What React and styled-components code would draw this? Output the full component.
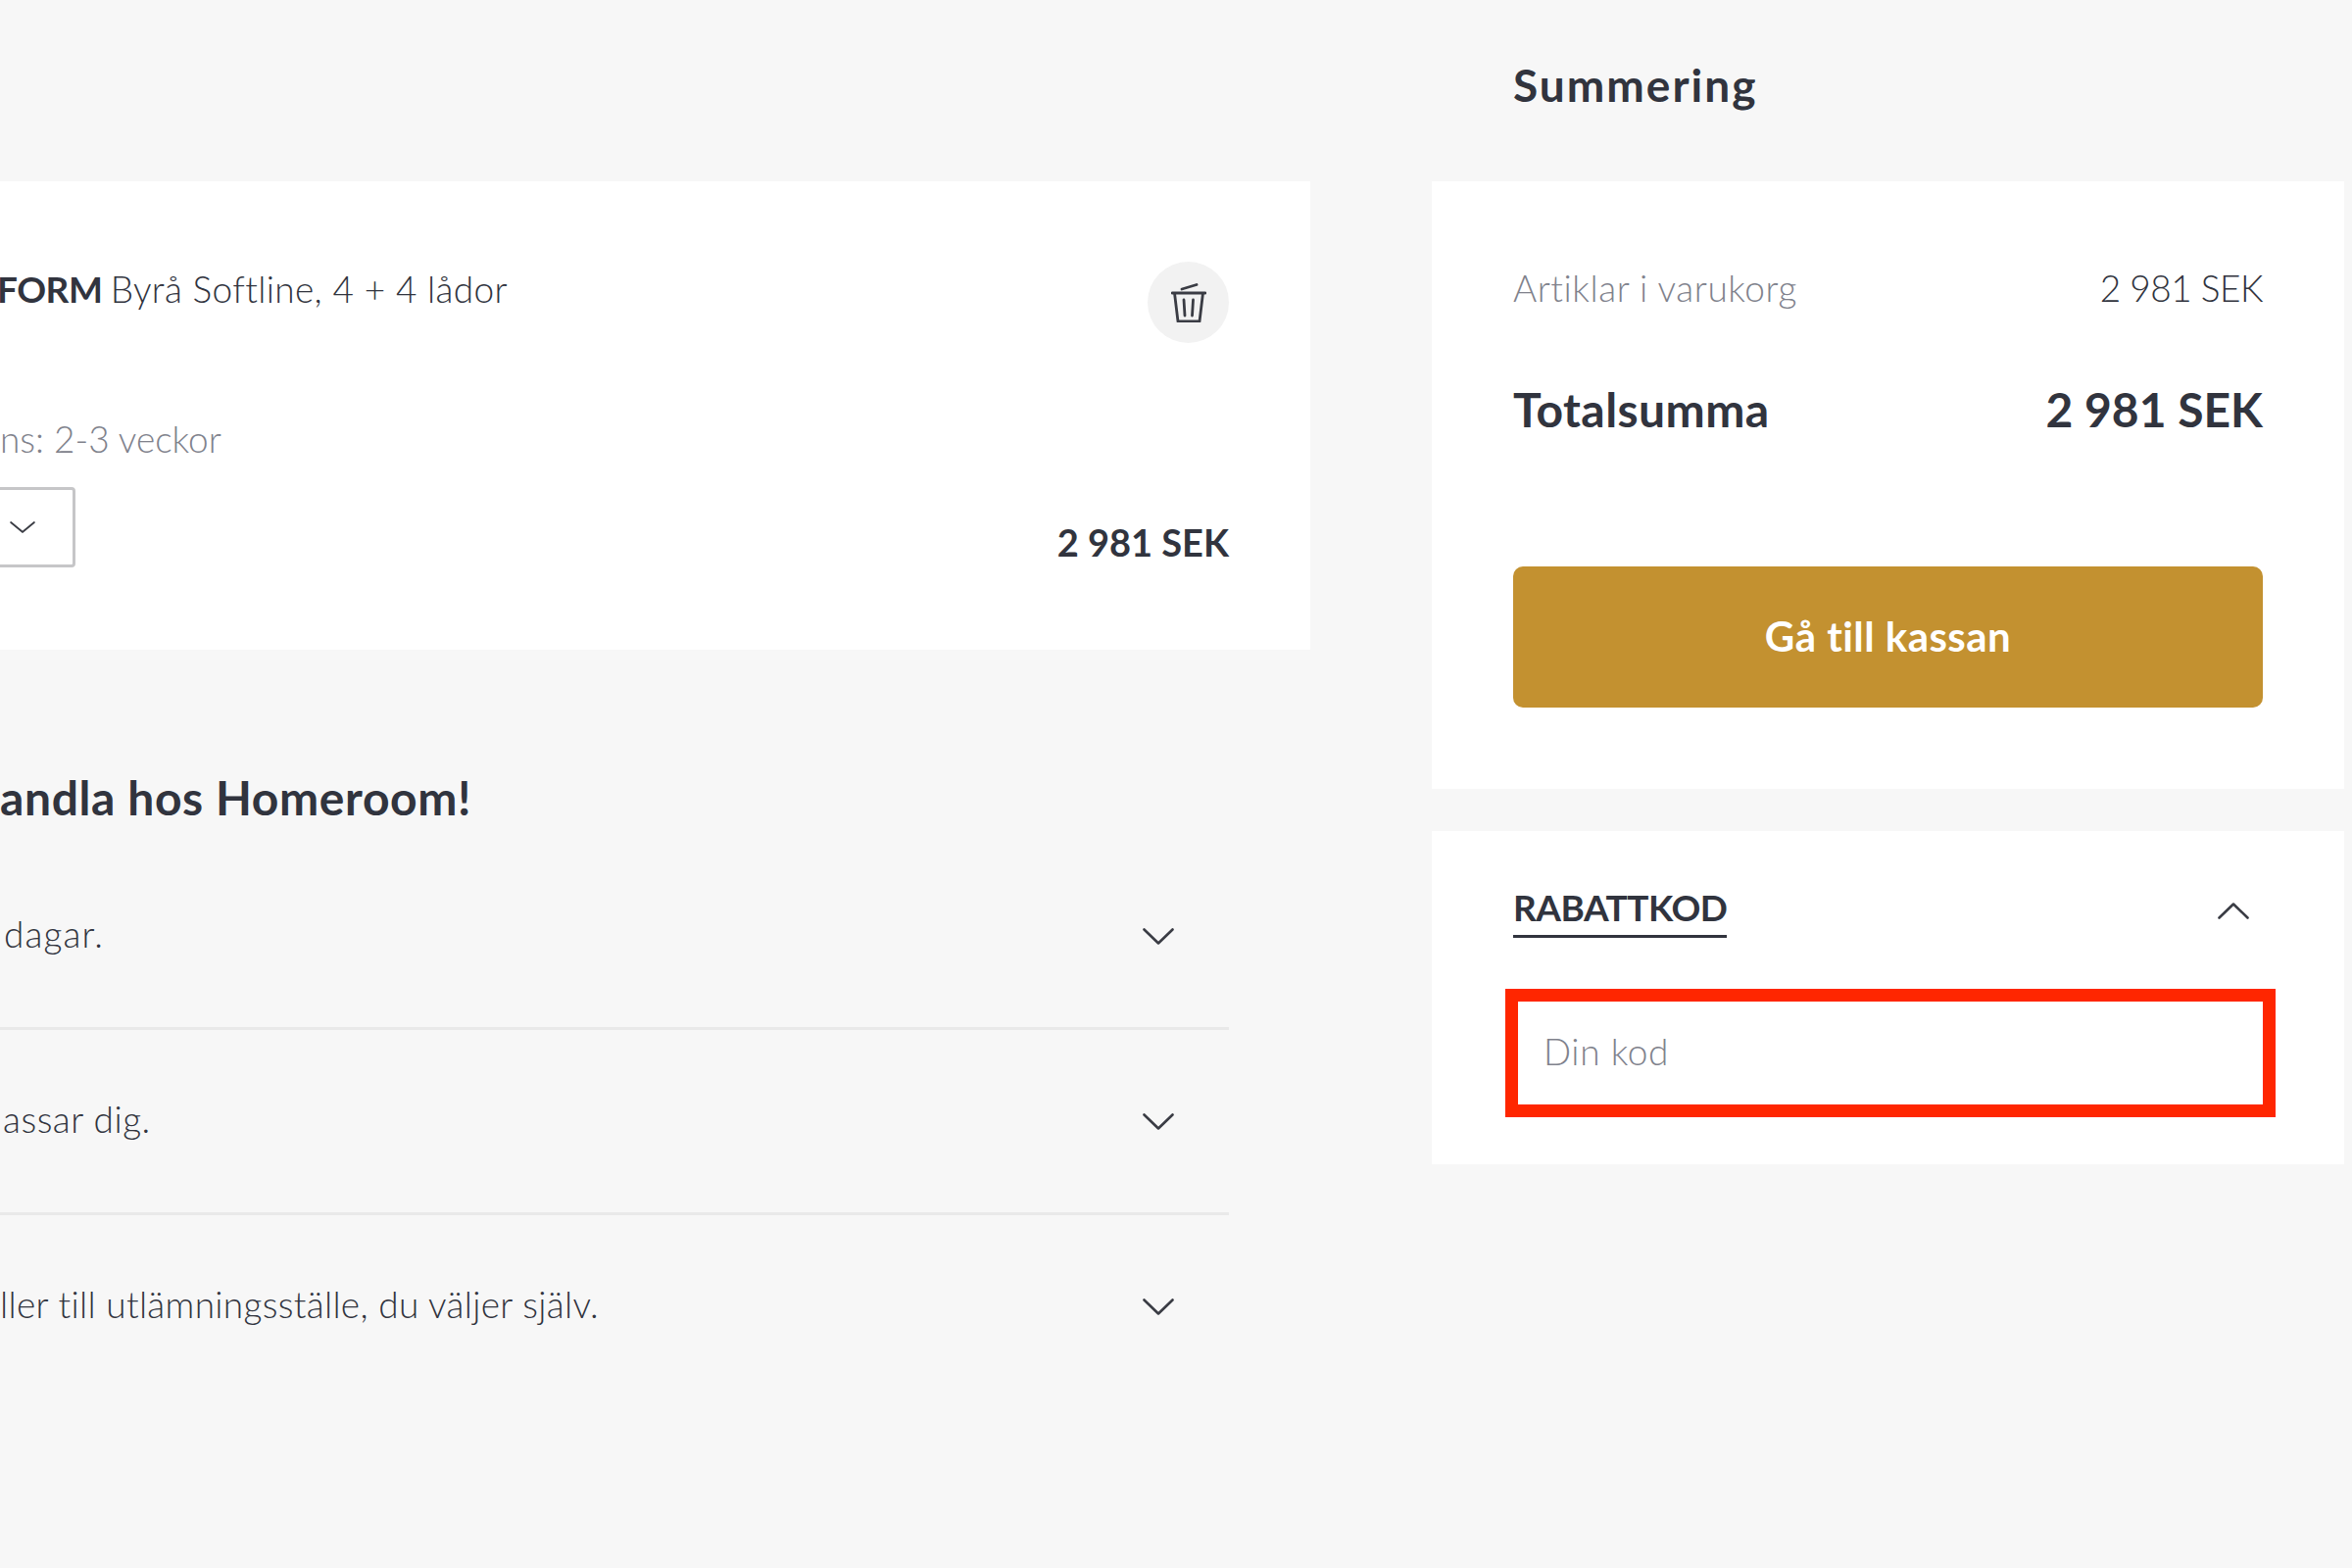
import React from "react";
import styled, { createGlobalStyle } from "styled-components";

const GlobalStyle = createGlobalStyle`
  html, body {
    margin: 0;
    padding: 0;
    background: #f7f7f7;
  }
`;

const Page = styled.div`
  width: 2400px;
  height: 1600px;
  overflow: hidden;
  display: grid;
  grid-template-columns: 1337px 931px;
  column-gap: 124px;
  background: #f7f7f7;
  color: #31343e;
  font-family: Lato, "Open Sans", sans-serif;
  font-variant-ligatures: none;
`;

const LeftColumn = styled.main`
  padding-top: 185px;
`;

const RightColumn = styled.aside`
  display: flex;
  flex-direction: column;
  gap: 43px;
`;

const SummaryTitle = styled.h2`
  margin: 0 0 -43px 83px;
  height: 185px;
  padding-top: 60px;
  box-sizing: border-box;
  font-size: 46px;
  line-height: 54px;
  font-weight: 700;
  letter-spacing: 2px;
`;

const ItemCard = styled.section`
  display: flex;
  justify-content: space-between;
  height: 478px;
  box-sizing: border-box;
  padding: 83px 83px 83px 0;
  background: #fff;
`;

const ItemInfo = styled.div`
  display: flex;
  flex-direction: column;
`;

const ItemName = styled.div`
  margin: -1px 0 1px -3px;
  font-size: 37px;
  line-height: 56px;
  font-weight: 300;
  letter-spacing: 0.35px;
  white-space: nowrap;

  b {
    margin-right: -2px;
    font-weight: 700;
    letter-spacing: -0.5px;
  }
`;

const LeadTime = styled.div`
  margin-top: 96px;
  font-size: 37px;
  line-height: 56px;
  font-weight: 300;
  color: #80828c;
`;

const QuantitySelect = styled.div`
  display: flex;
  align-items: center;
  width: 87px;
  height: 82px;
  margin: 21px 0 0 -10px;
  padding-left: 17px;
  box-sizing: border-box;
  border: 3px solid #c6c6c8;
  border-radius: 4px;
`;

const ItemActions = styled.div`
  display: flex;
  flex-direction: column;
  align-items: flex-end;
  justify-content: space-between;
`;

const TrashButton = styled.button`
  display: flex;
  align-items: center;
  justify-content: center;
  width: 83px;
  height: 83px;
  margin-top: -1px;
  padding: 0;
  border: 0;
  border-radius: 50%;
  background: #f2f2f2;
`;

const ItemPrice = styled.div`
  margin-bottom: 1px;
  font-size: 38px;
  line-height: 52px;
  font-weight: 700;
  white-space: nowrap;
`;

const UspTitle = styled.h2`
  margin: 0;
  padding-top: 121px;
  height: 199px;
  box-sizing: border-box;
  font-size: 48px;
  line-height: 60px;
  font-weight: 700;
  letter-spacing: 0.6px;
  white-space: nowrap;
`;

const UspList = styled.div`
  width: 1254px;
`;

const UspRow = styled.div`
  display: flex;
  align-items: center;
  justify-content: space-between;
  height: 189px;
  box-sizing: border-box;
  padding: 0 56px 5px ${(p) => p.$indent || 0}px;
  border-bottom: 3px solid ${(p) => (p.$last ? "transparent" : "#e9e9e9")};
  font-size: 37px;
  font-weight: 300;
  letter-spacing: ${(p) => p.$tracking || 0.3}px;
  white-space: nowrap;
`;

const SummaryCard = styled.section`
  padding: 83px;
  background: #fff;
`;

const SummaryRow = styled.div`
  display: flex;
  justify-content: space-between;
  font-size: ${(p) => (p.$total ? "48px" : "37px")};
  line-height: ${(p) => (p.$total ? "64px" : "52px")};
  font-weight: ${(p) => (p.$total ? 700 : 300)};
  margin-top: ${(p) => (p.$total ? "66px" : "0")};
`;

const RowLabel = styled.span`
  color: ${(p) => (p.$muted ? "#80828c" : "inherit")};
  letter-spacing: ${(p) => (p.$muted ? "0.55px" : "0.45px")};
`;

const RowValue = styled.span`
  letter-spacing: ${(p) => (p.$tight ? "-0.5px" : "0")};
`;

const CheckoutButton = styled.button`
  display: block;
  width: 100%;
  height: 144px;
  margin-top: 128px;
  padding-bottom: 3px;
  border: 0;
  border-radius: 10px;
  background: #c39130;
  color: #fff;
  font-family: inherit;
  font-variant-ligatures: none;
  font-size: 42px;
  font-weight: 700;
  letter-spacing: 0.45px;
`;

const DiscountCard = styled.section`
  height: 340px;
  box-sizing: border-box;
  padding: 54px 83px 0;
  background: #fff;
`;

const DiscountHeader = styled.div`
  display: flex;
  align-items: center;
  justify-content: space-between;
  padding-right: 14px;
`;

const DiscountLabel = styled.span`
  height: 52px;
  font-size: 37px;
  line-height: 47px;
  font-weight: 700;
  letter-spacing: -0.5px;
  border-bottom: 3px solid #31343e;
`;

const CodeInput = styled.input`
  display: block;
  width: 786px;
  height: 131px;
  margin: 52px 0 0 -8px;
  padding: 0 0 5px 26px;
  box-sizing: border-box;
  border: 13px solid #ff2600;
  background: #fff;
  font-family: inherit;
  font-size: 37px;
  font-weight: 300;
  letter-spacing: 0.6px;
  outline: none;

  &::placeholder {
    color: #80828c;
    opacity: 1;
  }
`;

const ChevronSvg = styled.svg`
  flex: none;
  margin-top: ${(p) => p.$nudge || 0}px;
`;

const Chevron = ({ up, width = 32, height = 17, nudge }) => (
  <ChevronSvg width={width} height={height} viewBox="0 0 32 17" fill="none" preserveAspectRatio="none" $nudge={nudge}>
    <path
      d={up ? "M1.5 15.5 16 1.5l14.5 14" : "M1.5 1.5 16 15.5 30.5 1.5"}
      stroke="#3a3c44"
      strokeWidth="2.6"
      strokeLinecap="round"
      strokeLinejoin="round"
    />
  </ChevronSvg>
);

const TrashIcon = () => (
  <svg width="36" height="40" viewBox="0 0 36 40" fill="none">
    <path
      d="M11 6 26 1.5M1 10h34M3.5 10l3.5 29h22l3.5-29M13 17l1 16M22.5 17l-1 16"
      stroke="#3a3c44"
      strokeWidth="2.8"
      strokeLinecap="round"
      strokeLinejoin="round"
    />
  </svg>
);

const usps = [
  { text: "dagar.", indent: 4, tracking: 1.1 },
  { text: "assar dig.", indent: 3, tracking: 0.5 },
  { text: "ller till utlämningsställe, du väljer själv.", last: true },
];

export default function App() {
  return (
    <Page>
      <GlobalStyle />
      <LeftColumn>
        <ItemCard>
          <ItemInfo>
            <ItemName>
              <b>FORM</b> Byrå Softline, 4 + 4 lådor
            </ItemName>
            <LeadTime>ns: 2-3 veckor</LeadTime>
            <QuantitySelect>
              <Chevron width={26} height={12} />
            </QuantitySelect>
          </ItemInfo>
          <ItemActions>
            <TrashButton aria-label="Ta bort">
              <TrashIcon />
            </TrashButton>
            <ItemPrice>2 981 SEK</ItemPrice>
          </ItemActions>
        </ItemCard>
        <UspTitle>andla hos Homeroom!</UspTitle>
        <UspList>
          {usps.map((usp) => (
            <UspRow key={usp.text} $last={usp.last} $indent={usp.indent} $tracking={usp.tracking}>
              {usp.text}
              <Chevron nudge={5} />
            </UspRow>
          ))}
        </UspList>
      </LeftColumn>
      <RightColumn>
        <SummaryTitle>Summering</SummaryTitle>
        <SummaryCard>
          <SummaryRow>
            <RowLabel $muted>Artiklar i varukorg</RowLabel>
            <RowValue $tight>2 981 SEK</RowValue>
          </SummaryRow>
          <SummaryRow $total>
            <RowLabel>Totalsumma</RowLabel>
            <RowValue>2 981 SEK</RowValue>
          </SummaryRow>
          <CheckoutButton>Gå till kassan</CheckoutButton>
        </SummaryCard>
        <DiscountCard>
          <DiscountHeader>
            <DiscountLabel>RABATTKOD</DiscountLabel>
            <Chevron up />
          </DiscountHeader>
          <CodeInput placeholder="Din kod" />
        </DiscountCard>
      </RightColumn>
    </Page>
  );
}
